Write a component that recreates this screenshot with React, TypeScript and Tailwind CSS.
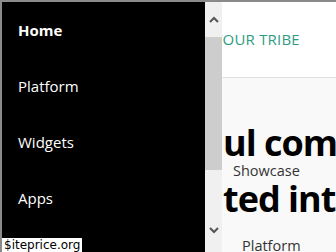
import React from "react";

const font = { fontFamily: '"Open Sans", "Noto Sans", sans-serif' };

function ScrollBar() {
  return (
    <div className="w-[17px] shrink-0 bg-[#f0f0f0] flex flex-col items-center">
      <div className="h-[35px] w-full flex items-center justify-center">
        <svg width="10" height="7" viewBox="0 0 10 7">
          <path d="M1 6 L5 2 L9 6" stroke="#555" strokeWidth="2" fill="none" />
        </svg>
      </div>
      <div className="h-[133px] w-full bg-[#cdcdcd]" />
      <div className="flex-1 w-full flex items-end justify-center pb-[18px]">
        <svg width="10" height="7" viewBox="0 0 10 7">
          <path d="M1 1 L5 5 L9 1" stroke="#555" strokeWidth="2" fill="none" />
        </svg>
      </div>
    </div>
  );
}

export default function App() {
  const navItems = ["Home", "Platform", "Widgets", "Apps"];

  return (
    <div
      className="w-[336px] h-[252px] overflow-hidden relative border-t-2 border-l-2 border-[#8a8a8a] flex"
      style={font}
    >
      {/* Side menu */}
      <div className="w-[203px] shrink-0 bg-black flex flex-col pl-4 pt-[19px] gap-[37px]">
        {navItems.map((item, i) => (
          <div
            key={item}
            className={`text-[15px] leading-[19px] text-white ${i === 0 ? "font-bold" : ""}`}
          >
            {item}
          </div>
        ))}
      </div>

      <ScrollBar />

      {/* Page behind the menu */}
      <div className="flex-1 min-w-0 overflow-hidden flex flex-col">
        <div className="h-[76px] shrink-0 bg-white border-b border-[#e2e2e2] flex items-center">
          <div className="ml-[-8px] text-[15px] tracking-[0.2px] text-[#2e9b82] whitespace-nowrap">YOUR TRIBE</div>
        </div>
        <div className="flex-1 bg-[#f9f9f9] flex flex-col pt-[47px]">
          <div className="ml-[1px] text-[36px] leading-[36px] font-bold text-black whitespace-nowrap tracking-[-1px]">
            ul com<span className="ml-[6px]">ponents</span>
          </div>
          <div className="ml-[11px] text-[14.5px] leading-[20px] text-[#333] whitespace-nowrap">Showcase</div>
          <div className="ml-[1px] text-[36px] leading-[36px] font-bold text-black whitespace-nowrap tracking-[-1px]">
            ted int<span className="ml-[6px]">egrations</span>
          </div>
          <div className="ml-[20px] mt-[19px] text-[14.5px] leading-[20px] text-[#333] whitespace-nowrap">Platform</div>
        </div>
      </div>

      {/* Watermark */}
      <div
        className="absolute left-0 bottom-0 bg-white px-[2px] text-[12px] leading-[14px] text-black"
        style={{ fontFamily: '"DejaVu Sans", sans-serif' }}
      >
        $iteprice.org
      </div>
    </div>
  );
}
